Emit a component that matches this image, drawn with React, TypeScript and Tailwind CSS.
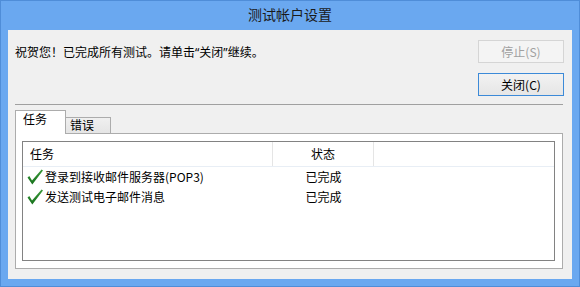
import React from "react";

const Check = () => (
  <svg width="16" height="16" viewBox="0 0 16 16" className="shrink-0">
    <defs>
      <linearGradient id="g" x1="0" y1="0" x2="0" y2="1">
        <stop offset="0" stopColor="#3a9a3a" />
        <stop offset="1" stopColor="#16701c" />
      </linearGradient>
    </defs>
    <path d="M0.5 8.5 L2.3 7 L5 11.6 L14.6 0.4 L16 1.6 L5.3 15.6 Z" fill="url(#g)" />
  </svg>
);

const Q = ({ c }: { c: string }) => (
  <span style={{ fontFamily: '"Noto Sans", sans-serif' }}>{c}</span>
);

export default function App() {
  const font = { fontFamily: '"Noto Sans CJK SC", "Noto Sans", sans-serif' };
  return (
    <div
      className="w-[580px] h-[287px] bg-[#6aa8f0] border border-[#4f8dd8] flex flex-col text-[#000]"
      style={font}
    >
      <div className="h-[29px] flex items-center justify-center text-[14px] text-[#1a1a1a] leading-none pb-[3px]">
        测试帐户设置
      </div>
      <div className="mx-[7px] h-[249px] bg-[#f0f0f0] flex flex-col pl-[7px] pr-[8px] pb-[10px]">
        <div className="flex h-[74px]">
          <div className="flex-1 pt-[15px] text-[12px] leading-[14px]">
            祝贺您！已完成所有测试。请单击<Q c="“" />关闭<Q c="”" />继续。
          </div>
          <div className="flex flex-col gap-[10px] pt-[10px]">
            <div className="w-[86px] h-[23px] border border-[#d5d5d5] bg-[#f4f4f4] flex items-center justify-center text-[12px] text-[#a0a0a0]">
              停止(S)
            </div>
            <div className="w-[86px] h-[23px] border border-[#3c8ad8] bg-gradient-to-b from-[#f2f2f2] to-[#e6e6e6] flex items-center justify-center text-[12px]">
              关闭(C)
            </div>
          </div>
        </div>
        <div className="h-px bg-[#a0a0a0] mr-[1px]" />
        <div className="flex items-end h-[28px] pt-[4px] text-[12px]">
          <div className="relative z-10 -mb-px w-[51px] h-[24px] bg-white border border-b-0 border-[#acacac] pl-[7px] pt-[1px] leading-[14px]">
            任务
          </div>
          <div className="w-[45px] h-[16px] bg-gradient-to-b from-[#f0f0f0] to-[#e5e5e5] border border-b-0 border-l-0 border-[#acacac] pl-[4px] leading-[13px]">
            错误
          </div>
        </div>
        <div className="flex-1 bg-white border border-[#acacac] pt-[7px] pb-[7px] pl-[6px] pr-[7px] mr-[1px]">
          <div className="h-full border border-[#828282] flex flex-col text-[12px]">
            <div className="h-[25px] flex border-b border-[#e8eef5] shrink-0">
              <div className="w-[250px] pl-[7px] flex items-center border-r border-[#e5e5e5]">任务</div>
              <div className="w-[101px] flex items-center justify-center border-r border-[#e5e5e5]">状态</div>
              <div className="flex-1" />
            </div>
            {["登录到接收邮件服务器(POP3)", "发送测试电子邮件消息"].map((t) => (
              <div key={t} className="h-[20px] flex items-center">
                <div className="w-[250px] flex items-center pl-[4px] gap-[2px]">
                  <Check />
                  <span className="leading-[14px]">{t}</span>
                </div>
                <div className="w-[101px] text-center leading-[14px]">已完成</div>
              </div>
            ))}
          </div>
        </div>
      </div>
    </div>
  );
}
